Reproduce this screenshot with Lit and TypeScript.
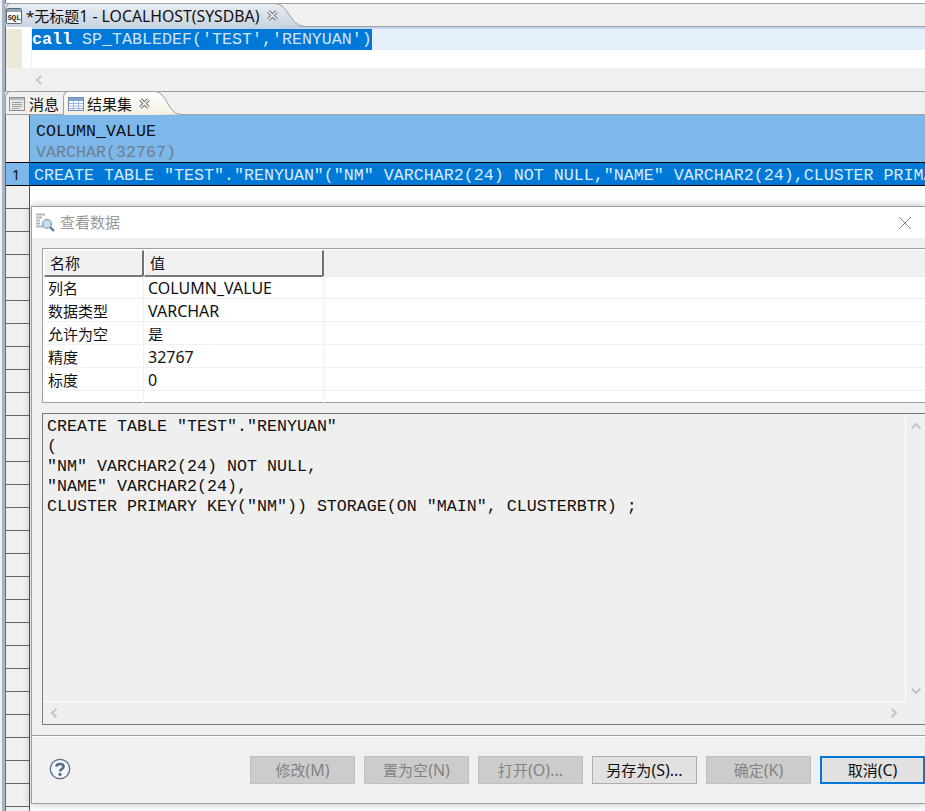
import { LitElement, html, css, svg } from "lit";
import { customElement } from "lit/decorators.js";

const SANS = css`"Noto Sans", "Noto Sans CJK SC", sans-serif`;
const MONO = css`"Liberation Mono", "Noto Sans CJK SC", monospace`;

const rows = [
  ["列名", "COLUMN_VALUE", true],
  ["数据类型", "VARCHAR", true],
  ["允许为空", "是", false],
  ["精度", "32767", true],
  ["标度", "0", true],
  ["", "", false],
] as const;

const buttons = [
  ["修改", "(M)", "off"],
  ["置为空", "(N)", "off"],
  ["打开", "(O)...", "off"],
  ["另存为", "(S)...", ""],
  ["确定", "(K)", "off"],
  ["取消", "(C)", "def"],
];

const closeIcon = html`<svg class="tabx" width="11" height="11" viewBox="0 0 11 11">
  <path d="M1.5 1.5 L9.5 9.5 M9.5 1.5 L1.5 9.5" stroke="#6f6f6f" stroke-width="3.6" fill="none"/>
  <path d="M1.5 1.5 L9.5 9.5 M9.5 1.5 L1.5 9.5" stroke="#fff" stroke-width="1.5" fill="none"/>
</svg>`;

const sqlIcon = html`<svg width="16" height="16" viewBox="0 0 16 16">
  <rect x="0.5" y="0.5" width="15" height="15" rx="1" fill="#fff" stroke="#5d6877"/>
  <rect x="1" y="1" width="14" height="3" fill="#94a4b8"/>
  <text x="1.4" y="12" font-family="Liberation Mono" font-size="8" font-weight="700" textLength="13.4" lengthAdjust="spacingAndGlyphs" fill="#222">SQL</text>
</svg>`;

const msgIcon = html`<svg width="16" height="14" viewBox="0 0 16 14">
  <rect x="0.5" y="0.5" width="15" height="13" fill="#e6e6e6" stroke="#8f8f8f"/>
  <rect x="1" y="1" width="14" height="2" fill="#b9b9b9"/>
  <path d="M3 5.5H13M3 7.5H13M3 9.5H13M3 11.5H10" stroke="#a0a0a0"/>
</svg>`;

const gridIcon = html`<svg width="16" height="14" viewBox="0 0 16 14">
  <rect x="0.5" y="0.5" width="15" height="13" fill="#fff" stroke="#6f8db3"/>
  <rect x="1" y="1" width="14" height="3" fill="#7fa3cf"/>
  <path d="M1 6.5H15M1 9H15M1 11.5H15M5.5 4V13M10.5 4V13" stroke="#9db8d8"/>
</svg>`;

const findIcon = html`<svg width="20" height="20" viewBox="0 0 20 20">
  <path d="M1 2.5H10M1 5.5H7M1 8.5H5M1 11.5H5M1 14.5H8" stroke="#b4b4b4" stroke-width="2"/>
  <circle cx="12" cy="12" r="4.4" fill="#bfe0f6" stroke="#8fa3b5" stroke-width="1.4"/>
  <path d="M15.2 15.2 L19 19" stroke="#52728f" stroke-width="2.2"/>
</svg>`;

const helpIcon = html`<svg width="22" height="22" viewBox="0 0 22 22">
  <circle cx="11" cy="11" r="9.7" fill="#f4f6f9" stroke="#5a6d8c" stroke-width="1.3"/>
  <path d="M7.4 8.6 C7.6 5.2 14.4 5 14.6 8.6 C14.7 10.9 11 11 11 13.6" fill="none" stroke="#56688a" stroke-width="2.6"/>
  <rect x="9.6" y="15" width="2.8" height="2.8" fill="#56688a"/>
</svg>`;

const chev = (d: string) => svg`<path d=${d} fill="none" stroke="#c4c4c4" stroke-width="2"/>`;
const left = html`<svg width="8" height="10" viewBox="0 0 8 10">${chev("M6.5 0.8 L2 5 L6.5 9.2")}</svg>`;
const right = html`<svg width="8" height="10" viewBox="0 0 8 10">${chev("M1.5 0.8 L6 5 L1.5 9.2")}</svg>`;
const up = html`<svg width="10" height="8" viewBox="0 0 10 8">${chev("M0.8 6.5 L5 2 L9.2 6.5")}</svg>`;
const down = html`<svg width="10" height="8" viewBox="0 0 10 8">${chev("M0.8 1.5 L5 6 L9.2 1.5")}</svg>`;

const tabCurve = (id: string, top: string, bottom: string, w: number, h: number) =>
  html`<svg class="curve" width=${w} height=${h} viewBox="0 0 ${w} ${h}">
    <defs><linearGradient id=${id} x1="0" y1="0" x2="0" y2="1"><stop offset="0" stop-color=${top}/><stop offset="1" stop-color=${bottom}/></linearGradient></defs>
    <path d="M0 0.5 C${w * 0.45} 0.5 ${w * 0.5} ${h - 0.5} ${w} ${h - 0.5} L0 ${h} Z" fill="url(#${id})"/>
    <path d="M0 0.5 C${w * 0.45} 0.5 ${w * 0.5} ${h - 0.5} ${w} ${h - 0.5}" fill="none" stroke="#a0a0a0"/>
  </svg>`;

@customElement("app-root")
export class AppRoot extends LitElement {
  static styles = css`
    :host { display: block; width: 925px; height: 811px; overflow: hidden; position: relative; background: #fff; font-family: ${SANS}; color: #111; }
    * { box-sizing: border-box; }
    svg { flex: none; }
    .lat { font-size: 16px; }
    .tab1 .lat { font-size: 15.8px; }
    .app { display: flex; width: 925px; height: 811px; }
    .edge { width: 6px; flex: none; background: linear-gradient(90deg, #f0f0f0 0 2px, #a7b4c6 2px 5px, #6d6d6d 5px 6px); }
    .main { flex: 1; min-width: 0; display: flex; flex-direction: column; }

    .bar { display: flex; align-items: stretch; background: #f0f0f0; flex: none; height: 24px; border-top: 1px solid #a0a0a0; border-bottom: 1px solid #a0a0a0; margin-left: -1px; }
    .bar1 { margin-top: 3px; }
    .tab { display: flex; align-items: center; height: 24px; margin: -1px 0; white-space: nowrap; border-top: 1px solid #a0a0a0; border-left: 1px solid #a0a0a0; }
    .tab1 { width: 270px; gap: 4px; font-size: 15px; background: linear-gradient(#e8edf3, #c8d4e1); border-radius: 6px 0 0 0; }
    .tab2 { width: 58px; padding-left: 3px; font-size: 15px; gap: 4px; border-radius: 6px 0 0 0; }
    .tab3 { width: 92px; padding-left: 4px; font-size: 15px; gap: 3px; background: linear-gradient(#fff, #f3f0e0); border-radius: 6px 0 0 0; }
    .curve { display: block; margin: -1px 0; }
    .tabx { margin-left: 4px; position: relative; z-index: 1; }

    .editor { height: 41px; flex: none; display: flex; background: #fff; font: 16.67px/22px ${MONO}; }
    .ruler { width: 16px; background: #ece9d8; margin-top: 2px; }
    .gap { width: 10px; background: #fff; margin-top: 2px; border-right: 1px solid #f0f0f0; }
    .editlines { flex: 1; min-width: 0; padding-top: 2px; }
    .curline { height: 21px; background: #e6f0fc; box-shadow: 0 -2px 0 #c3d4ea; white-space: pre; }
    .sel { background: #0078d7; display: inline-block; height: 21px; color: #cfe6fb; }
    .sel b { color: #fff; }

    .hscroll { height: 23px; flex: none; background: #f0f0f0; display: flex; align-items: center; padding: 0 0 0 29px; }

    .grid { flex: 1; min-height: 0; display: flex; flex-direction: column; font: 16.67px/22px ${MONO}; background: #fff; }
    .head { height: 47px; flex: none; display: flex; background: #7db8ea; }
    .corner { width: 24px; flex: none; background: #f0f0f0; border-right: 1px solid #555; }
    .headcell { padding: 6px 0 0 6px; line-height: 21px; color: #111; }
    .headcell .ty { color: #6f7f8f; display: block; }
    .row { height: 24px; flex: none; display: flex; background: #0078d7; border-top: 1px solid #000; border-bottom: 1px solid #000; white-space: pre; color: #d9ecfc; overflow: hidden; line-height: 26px; }
    .num { width: 24px; flex: none; background: #7db8ea; color: #111; text-align: center; font: 15px/22px ${SANS}; border-right: 1px solid #555; padding-right: 3px; }
    .rowtext { padding-left: 4px; }
    .rest { flex: 1; display: flex; }
    .gutter { width: 24px; flex: none; border-right: 1px solid #555; background: repeating-linear-gradient(#f0f0f0 0 22px, #666 22px 23px); }

    .dialog { position: absolute; left: 31px; top: 206px; width: 894px; height: 598px; display: flex; flex-direction: column; background: #f0f0f0; border: 1px solid #a0a0a0; border-right: 0; box-shadow: 0 0 8px rgba(0,0,0,.28); }
    .dtitle { height: 31px; flex: none; background: #fff; display: flex; align-items: center; padding: 0 0 2px 3px; gap: 5px; font-size: 15px; color: #9a9a9a; position: relative; }
    .dclose { position: absolute; left: 866px; top: 9px; }
    .dbody { flex: 1; display: flex; flex-direction: column; padding: 10px 0 0 10px; }

    .props { height: 155px; flex: none; border: 1px solid #a0a0a0; border-right: 0; background: #fff; padding: 1px 0 0 1px; font-size: 15px; }
    .hdr { display: grid; grid-template-columns: 100px 180px 1fr; height: 26px; background: #f0f0f0; }
    .hc { border-style: solid; border-width: 1px 2px 2px 1px; border-color: #fff #707070 #7a7a7a #fff; padding-left: 5px; line-height: 24px; background: #f0f0f0; }
    .hc.fill { border: 0; }
    .tr { display: grid; grid-template-columns: 100px 180px; height: 23px; border-bottom: 1px solid #f0f0f0; line-height: 24px; }
    .tr > div { padding-left: 4px; border-right: 1px solid #f0f0f0; height: 22px; white-space: nowrap; }

    .sqlbox { margin-top: 10px; height: 312px; flex: none; border: 1px solid #777; border-right: 0; background: #efefef; display: grid; grid-template-columns: 1fr 19px; grid-template-rows: 1fr 22px; font: 16.67px/20px ${MONO}; color: #111; }
    .sqltext { padding: 3px 0 0 4px; white-space: pre; border-right: 1px solid #fff; border-bottom: 1px solid #fff; overflow: hidden; }
    .vs { display: flex; flex-direction: column; justify-content: space-between; align-items: center; padding: 8px 0 7px; }
    .hs { display: flex; justify-content: space-between; align-items: center; padding: 0 8px 0 7px; }

    .foot { margin: 10px 0 0 -10px; border-top: 1px solid #a0a0a0; box-shadow: inset 0 1px 0 #fff; flex: 1; display: flex; align-items: center; padding-left: 17px; }
    .help { flex: none; width: 22px; height: 22px; margin: 0 179px 2px 0; display: block; }
    .btns { display: flex; gap: 9px; font-size: 15px; }
    .btn { width: 105px; height: 28px; border: 1px solid #adadad; background: #e1e1e1; color: #111; text-align: center; line-height: 26px; white-space: nowrap; }
    .btn.off { background: #cccccc; border-color: #bfbfbf; color: #838383; }
    .btn.def { border: 2px solid #0078d7; line-height: 24px; }
  `;

  render() {
    return html`
      <div class="app">
        <div class="edge"></div>
        <div class="main">
          <div class="bar bar1">
            <div class="tab tab1">${sqlIcon}<span>*无标题<span class="lat">1 - LOCALHOST(SYSDBA)</span></span>${closeIcon}</div>
            ${tabCurve("g1", "#e8edf3", "#c8d4e1", 30, 24)}
          </div>
          <div class="editor">
            <div class="ruler"></div>
            <div class="gap"></div>
            <div class="editlines"><div class="curline"><span class="sel"><b>call</b> SP_TABLEDEF('TEST','RENYUAN')</span></div></div>
          </div>
          <div class="hscroll">${left}</div>
          <div class="bar bar2">
            <div class="tab tab2">${msgIcon}<span>消息</span></div>
            <div class="tab tab3">${gridIcon}<span>结果集</span>${closeIcon}</div>
            ${tabCurve("g2", "#fff", "#f3f0e0", 26, 24)}
          </div>
          <div class="grid">
            <div class="head">
              <div class="corner"></div>
              <div class="headcell">COLUMN_VALUE<span class="ty">VARCHAR(32767)</span></div>
            </div>
            <div class="row"><div class="num">1</div><div class="rowtext">CREATE TABLE "TEST"."RENYUAN"("NM" VARCHAR2(24) NOT NULL,"NAME" VARCHAR2(24),CLUSTER PRIMARY KEY("NM")) STORAGE(ON "MAIN", CLUSTERBTR) ;</div></div>
            <div class="rest"><div class="gutter"></div></div>
          </div>
        </div>
      </div>
      <div class="dialog">
        <div class="dtitle">${findIcon}<span>查看数据</span>
          <svg class="dclose" width="14" height="14" viewBox="0 0 14 14"><path d="M1 1L13 13M13 1L1 13" stroke="#8a8a8a" fill="none"/></svg>
        </div>
        <div class="dbody">
          <div class="props">
            <div class="hdr"><div class="hc">名称</div><div class="hc">值</div><div class="hc fill"></div></div>
            ${rows.map(([a, b, lat]) => html`<div class="tr"><div>${a}</div><div class=${lat ? "lat" : ""}>${b}</div></div>`)}
          </div>
          <div class="sqlbox">
            <div class="sqltext">CREATE TABLE "TEST"."RENYUAN"
(
"NM" VARCHAR2(24) NOT NULL,
"NAME" VARCHAR2(24),
CLUSTER PRIMARY KEY("NM")) STORAGE(ON "MAIN", CLUSTERBTR) ;</div>
            <div class="vs">${up}${down}</div>
            <div class="hs">${left}${right}</div>
          </div>
          <div class="foot">
            <span class="help">${helpIcon}</span>
            <div class="btns">
              ${buttons.map(([c, l, k]) => html`<div class="btn ${k}">${c}<span class="lat">${l}</span></div>`)}
            </div>
          </div>
        </div>
      </div>
    `;
  }
}
